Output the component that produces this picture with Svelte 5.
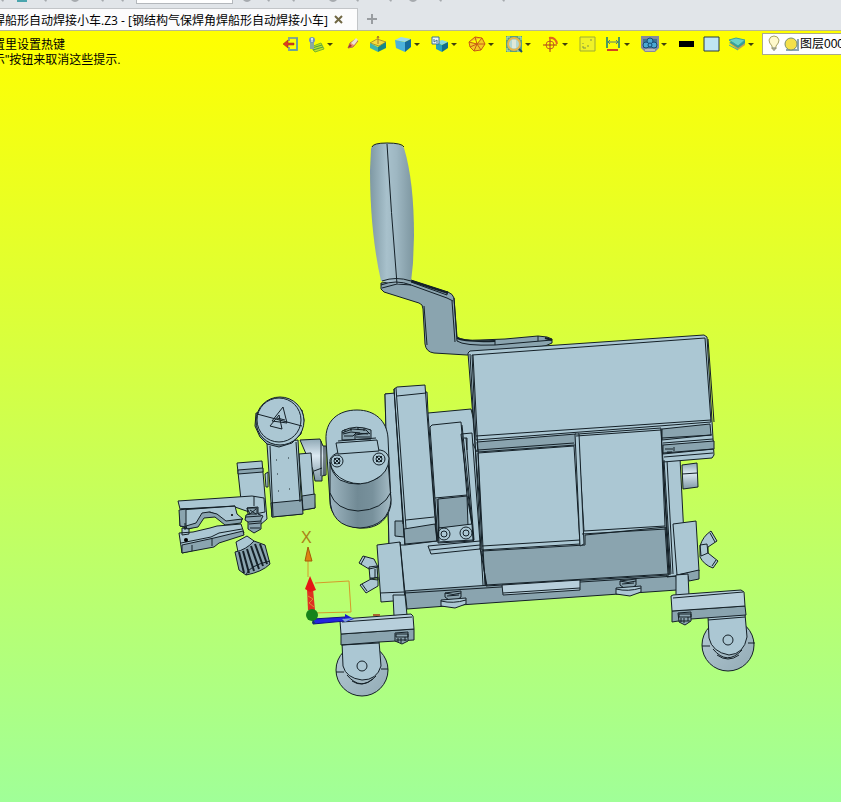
<script>
  const tools = [
    { id: 'exit', label: 'Exit', menu: false },
    { id: 'sketch', label: 'Layers', menu: true },
    { id: 'pencil', label: 'Edit', menu: false },
    { id: 'plane', label: 'Align plane', menu: false },
    { id: 'cube', label: 'Shade', menu: true },
    { id: 'view', label: 'Views', menu: true },
    { id: 'wire', label: 'Wireframe', menu: true },
    { id: 'fit', label: 'Zoom', menu: true },
    { id: 'target', label: 'Rotate', menu: true },
    { id: 'window', label: 'Window', menu: false },
    { id: 'measure', label: 'Measure', menu: true },
    { id: 'render', label: 'Render', menu: true },
    { id: 'line', label: 'Line colour', menu: false },
    { id: 'face', label: 'Face colour', menu: false },
    { id: 'stack', label: 'Layer manager', menu: true }
  ];
  const marks = [2, 45, 75, 102, 122, 247, 268, 293, 333, 357, 390, 413, 440, 503];
</script>

<div class="app">
  <header>
    <div class="ribbon">
      <svg width="841" height="8" aria-hidden="true">
        <rect x="17" y="0" width="10" height="2" fill="#4aa5ae" />
        {#each marks as x, i}
          {#if i % 3 === 2}
            <path d="M{x - 4} 0Q{x} 4 {x + 4} 0" fill="#a6aaae" />
          {:else}
            <path d="M{x - 1} 0h3l-1 2z" fill="#a6aaae" />
          {/if}
        {/each}
      </svg>
      <input aria-label="Filter" />
    </div>
    <nav class="tabs">
      <a class="tab" href="#doc">焊船形自动焊接小车.Z3 - [钢结构气保焊角焊船形自动焊接小车]</a>
      <button class="close" aria-label="Close tab">
        <svg width="10" height="10"><path d="M1 1l7 7M8 1l-7 7" stroke="#706744" stroke-width="2" /></svg>
      </button>
      <button class="add" aria-label="New tab">
        <svg width="12" height="12"><path d="M6 1v10M1 6h10" stroke="#999da1" stroke-width="2" /></svg>
      </button>
    </nav>
  </header>

  <main>
    <svg class="scene" viewBox="0 31 841 771" role="img" aria-label="Model">
      <defs>
        <linearGradient id="grip"><stop stop-color="#7f99a4" /><stop offset=".38" stop-color="#a8c1cc" /><stop offset=".6" stop-color="#9eb7c2" /><stop offset="1" stop-color="#7c959f" /></linearGradient>
        <linearGradient id="drum"><stop stop-color="#9db5c0" /><stop offset=".45" stop-color="#718a95" /><stop offset=".7" stop-color="#78919c" /><stop offset="1" stop-color="#a4bbc5" /></linearGradient>
        <linearGradient id="shaft" x2="0" y2="1"><stop stop-color="#8fa8b5" /><stop offset=".4" stop-color="#dbe9f2" /><stop offset="1" stop-color="#7f98a5" /></linearGradient>
        <linearGradient id="rim" x2="1" y2="1"><stop stop-color="#b4cad4" /><stop offset="1" stop-color="#93abb6" /></linearGradient>
      </defs>

      <!-- crank handle -->
      <path class="m" d="M381 283V289L384 292 419 303Q423 304 423 309L425 344Q426 352 434 353L467 355 505 352 545 346 552 343V339L547 337 538 336 505 339 480 340Q463 341 457 337L454 298Q453 294 448 292L411 280Z" />
      <path class="n" d="M382 288L397 284 411 285 447 298 453 301M454 298L457 341Q464 346 495 345L552 340M495 340V345M538 336V341M411 282L447 295 447 291M424 306L427 345M452 301L455 342" />
      <path class="b" d="M457 338Q464 342 495 341M411 281L448 293M545 338L552 340" />
      <path fill="url(#grip)" d="M371 149Q372 143 387 143 401 143 404 148 414 181 414 236L413 263 411 282Q396 286 381 281C372 241 370 200 370 170Z" />
      <path class="n" d="M372 147Q373 143 387 143 402 143 404 147M387 144Q391 211 397 284M382 281Q396 276 411 281M381 285Q396 279 411 285" />

      <!-- chassis behind the main panels -->
      <path class="l" d="M385 394L427 392 428 413 471 409 480 445 489 587 405 596 389 545Z" />
      <path class="m" d="M405 591L676 572 677 590 460 605 407 609Z" />
      <path class="l" d="M661 457L680 458 686 575 667 577Z" />
      <path class="n" d="M667 460L673 574M405 593L676 576" />

      <!-- main housing -->
      <path class="l" d="M468 353L470 351 704 335 707 337 714 455 712 458 663 462 669 575 486 586Z" />
      <path class="m" d="M477 442L576 434 576 445 478 452ZM662 429L710 424 711 435 662 440ZM663 445L714 441 714 449 663 454Z" />
      <path class="m" d="M482 551L585 545 585 535 666 527 669 574 486 585Z" />
      <path class="l" d="M478 453L574 446 580 544 482 550ZM578 434L661 428 665 526 584 531Z" />
      <path class="l" d="M575 434L579 434 584 544 580 546Z" />
      <path class="n" d="M472 355L705 338 711 422 476 440ZM473 355L485 586M471 440L477 452M476 436L711 420M662 438L712 435M663 443L713 439M663 453L713 449M482 546L580 540M582 534L666 529M661 429L670 575M665 527L668 574M478 450L574 443M470 354L483 585M664 460L671 574M576 436L661 430M708 339L714 422" />
      <path class="n" d="M665 449h8M667 452h5M674 447v4M664 457L713 453" />
      <path class="p" d="M502 585L580 580 580 590 503 595Z" />
      <path class="n" d="M503 593L580 588" />

      <!-- underside screws -->
      <g id="foot">
        <path class="m" d="M620 581L636 579 636 585 632 588 624 588 620 585Z" />
        <path class="l" d="M616 588L641 586V592L630 596 616 594Z" />
        <path class="n" d="M616 589Q628 592 641 588M620 581Q628 584 636 581M622 584L634 583" />
      </g>
      <use href="#foot" x="-175" y="12" />

      <!-- left column -->
      <path class="l" d="M385 394L395 393 404 534 405 545 389 545Z" />
      <path class="l" d="M394 389L397 387 425 385 427 413 435 518 437 541 405 545Z" />
      <path class="m" d="M404 529L435 524 437 541 405 544ZM395 521L403 521 404 537 395 536Z" />
      <path class="n" d="M397 396L426 393M396 388L406 528M394 389L403 524M406 520L434 517M428 413L437 541M431 430L438 541" />

      <!-- narrow guide -->
      <path class="l" d="M461 434L472 433 480 543 474 544ZM430 427L432 425 461 422 467 496 472 524 473 541 438 543Z" />
      <path class="m" d="M438 499L467 496 468 526 439 528Z" />
      <path class="l" d="M439 528L472 524 473 540 438 542Z" />
      <path class="n" d="M462 425L472 523M435 498L467 495M437 499L439 541M464 438h3v12M466 438L474 540" />
      <g class="nf"><circle cx="444" cy="534" r="6" /><circle cx="444" cy="534" r="3" /><circle cx="466" cy="533" r="6" /><circle cx="466" cy="533" r="3" /></g>
      <path class="l" d="M428 546L480 541 480 549 431 554Z" />
      <path class="n" d="M430 550L480 545M480 548L487 586" />

      <!-- motor -->
      <path class="s" d="M300 440L320 439 323 446 326 446V475L322 476 322 481 315 481 313 470Z" />
      <path class="n" d="M321 441V476M324 446V475M314 471L322 468" />
      <path class="l" d="M326 440C325 421 338 410 357 410 375 410 387 421 388 438L391 504C388 521 376 529 360 528 343 527 330 515 330 502Z" />
      <path fill="url(#drum)" stroke="#142027" d="M330 462Q331 473 340 480 358 489 378 478 387 471 388 461L391 500Q389 526 360 528 330 527 330 497Z" />
      <path class="n" d="M330 493Q336 510 358 511 383 510 391 492" />
      <path class="l" d="M330 462Q329 457 337 453L380 450Q387 451 389 458 389 473 374 480 361 487 346 481 332 475 330 462Z" />
      <path class="l" d="M336 443L377 440 379 451 338 454Z" />
      <path class="m" d="M342 431Q356 424 371 430L371 439 342 440Z" />
      <path class="n" d="M342 433L352 429 366 430 370 434M338 441L376 438M344 436h9l3-3 12 1M355 440v-5l14-2M343 434l8-2 9 1M356 437h14M345 429v3M351 428v3M358 427v3M364 428v3" />
      <g class="nf"><circle cx="337" cy="461" r="6" /><circle cx="337" cy="461" r="3" /><circle cx="379" cy="459" r="6" /><circle cx="379" cy="459" r="3" /><path d="M334 458l6 6M340 458l-6 6M376 456l6 6M382 456l-6 6" /></g>

      <!-- adjusting post -->
      <path class="l" d="M299 454L311 453 315 508 303 510Z" />
      <path class="m" d="M302 496L315 494 315 508 303 510Z" />
      <path class="l" d="M267 444L298 440 302 514 272 517Z" />
      <path class="m" d="M271 503L302 500 303 514 272 517Z" />
      <path class="n" d="M270 446L273 516M296 442L300 502M276 460h1M288 458h1M277 474h1M289 489h1M278 491h1" />
      <path class="m" d="M256 413L255 426 260 437 267 444 279 447 292 443 301 434 304 420 302 410Z" />
      <circle class="l" cx="280" cy="421" r="24" />
      <circle class="nf" cx="279" cy="420" r="22" />
      <path class="n" d="M257 414L302 426M283 407L272 421 287 423ZM279 415L270 426 282 429ZM277 418L285 420" />

      <!-- clamp -->
      <path class="l" d="M237 463L262 461 267 519 260 525 241 500Z" />
      <path class="m" d="M238 470L263 468V472L238 474Z" />
      <path class="l" d="M265 474L268 472V487L266 487Z" />
      <path class="l" d="M178 501L252 496 264 498 265 512 255 514 235 507 180 509Z" />
      <path class="l" d="M180 510L235 506 237 514 243 519 226 523 218 515 210 512 203 514 197 526 189 529 180 526Z" />
      <path class="m" d="M179 510L186 509V527L180 526ZM186 526L196 523 202 513 209 512 217 514 226 521 242 519 241 523 225 525 215 517 204 518 198 527 187 529Z" />
      <path class="l" d="M182 528L189 529V534L182 535ZM179 533L193 532 210 528 217 526 241 524 244 533 219 541 213 546 182 553Z" />
      <path class="m" d="M182 545L214 538 243 531 244 535 219 543 214 547 182 553Z" />
      <path class="n" d="M181 543L211 537 219 533 242 529M192 545v6M212 538v8M254 496v10M181 509L235 506M185 523v7" />
      <circle cx="186" cy="540" r="2" /><circle cx="232" cy="515" r="1" />
      <path class="m" d="M247 508L258 507 258 514 263 516 261 520 261 529 254 533 248 529V522L245 520 246 515 250 514Z" />
      <path class="n" d="M247 508h10v6h-9zM250 510l6 4M250 514l6-5M246 517l15-1M248 522l13-1M249 524l11-1M250 528h10" />
      <path class="l" d="M236 542L247 536 254 541 253 548 238 552Z" />
      <path class="m" d="M235 552Q246 550 254 541L265 545 270 564Q262 572 246 575L239 570Z" />
      <path class="b" d="M239 552L244 573M243 551L249 573M247 549L254 571M251 546L259 569M255 544L263 566M260 544L267 564" />
      <path class="n" d="M246 575Q248 566 270 561" />

      <!-- side blocks, wing nuts and bolt -->
      <path class="l" d="M377 545L400 542 405 600 381 602Z" />
      <path class="n" d="M380 593L404 592M400 542L405 593" />
      <path class="l" d="M393 595L405 595 407 615 394 616ZM359 563L363 556 374 559 378 567 369 569ZM371 579L360 585 366 593 378 586 378 577ZM369 567L377 566 378 580 370 579Z" />
      <path class="n" d="M361 564L365 557M362 584L367 591M375 569V578M370 578L378 578" />
      <path class="l" d="M673 524L696 521 699 571 677 575Z" />
      <path class="m" d="M677 575L699 570V579L689 581 688 576Z" />
      <path class="l" d="M676 575L688 574 689 596 676 596Z" />
      <path class="s" d="M682 465L697 463 698 487 683 489Z" />
      <path class="n" d="M682 474L697 473" />
      <path class="l" d="M700 546Q703 536 711 531L717 541 708 547 708 553 718 561 713 568Q704 565 700 557Z" />
      <path class="n" d="M700 545L707 544 708 553 701 556ZM710 533L715 542M716 560L712 566" />

      <!-- right wheel -->
      <circle cx="728" cy="645" r="26" fill="url(#rim)" stroke="#142027" />
      <path class="n" d="M702 646h8M748 643h7M713 649Q727 666 742 650M717 655Q728 663 739 655" />
      <path class="l" d="M708 617L745 614 747 637Q744 654 729 655 712 652 709 638Z" />
      <path class="m" d="M672 611L745 606 746 615 691 619 672 622Z" />
      <path class="p" d="M671 596L673 595 741 590 744 592 745 606 672 611Z" />
      <path class="n" d="M673 598L743 592M708 620L745 617" />
      <path class="m" d="M678 613L691 612 691 621 685 625 679 622Z" />
      <path class="n" d="M679 614h12v3h-12zM681 618v4M688 617v4M684 618v5M679 621h11" />
      <circle class="nf" cx="728" cy="640" r="5" />

      <!-- left wheel -->
      <circle cx="362" cy="670" r="26" fill="url(#rim)" stroke="#142027" />
      <path class="n" d="M336 672h8M381 669h7M347 675Q361 692 376 676M352 681Q362 688 373 679" />
      <path class="l" d="M342 642L379 641 381 666Q377 680 362 680 346 678 343 666Z" />
      <path class="m" d="M341 634L414 629V640L379 642 341 645Z" />
      <path class="p" d="M340 621L342 619 411 614 413 616 414 629 341 634Z" />
      <path class="n" d="M342 622L412 617M342 645L379 643" />
      <path class="m" d="M395 633L408 632V641L402 644 395 641Z" />
      <path class="n" d="M396 634h12v3h-12zM398 638v4M405 637v4M401 638v5M396 640h11" />
      <circle class="nf" cx="362" cy="666" r="5" />

      <!-- axis triad -->
      <path d="M308 560V577M315 583L349 581 351 612 313 613" fill="none" stroke="#d59a2a" />
      <path d="M308 547L312 561H305Z" fill="#dd8412" stroke="#a55b08" />
      <path d="M307 589H313L315 610H308Z" fill="#df3022" />
      <path d="M308 596l5 3-4 4 5 4" fill="none" stroke="#d69334" />
      <path d="M310 576L316 590 310 592 305 589Z" fill="#e51515" />
      <path d="M313 619L345 617V621L313 624Z" fill="#2424df" stroke="#101086" />
      <path d="M345 614L354 619 345 622Z" fill="#1919cf" />
      <path d="M342 619L353 618 345 622Z" fill="#7fa1d7" />
      <circle cx="312" cy="615" r="6" fill="#16831b" />
      <path d="M313 620l3 4-4-1z" fill="#103b65" />
      <path d="M373 615h7" stroke="#a96332" stroke-width="2" />
      <text x="301" y="543">X</text>
    </svg>

    <div class="overlay">
      <p>置里设置热键<br />示"按钮来取消这些提示.</p>
      {#each tools as t}
        <button class="tool" class:menu={t.menu} aria-label={t.label}>
          <svg width="18" height="18" viewBox="0 0 18 18">
            {#if t.id === 'exit'}
              <path d="M7 6V3h8v12H7v-3" fill="none" stroke="#8aa888" stroke-width="2" /><path d="M15 3v12H8" fill="none" stroke="#4d9fa5" /><path d="M1 9l5-4v3h6v2H6v3z" fill="#de3c20" stroke="#8e3714" stroke-width=".5" />
            {:else if t.id === 'sketch'}
              <path d="M4 12l10-4 3 6-9 3z" fill="#c2e32b" stroke="#79b52e" /><path d="M5 13l10-3M6 15l10-3" stroke="#4aa044" /><path d="M3 7h4v7H3z" fill="#8bab9b" /><circle cx="5" cy="5" r="3" fill="#7396ba" /><path d="M5 3v4M4 4h2" stroke="#fff" />
            {:else if t.id === 'pencil'}
              <path d="M4 13l2-5 6-4 2 2-5 6z" fill="#ec9171" stroke="#b5734d" /><path d="M7 8l3 2 4-5-2-2z" fill="#ece5d5" /><path d="M4 13l2-4 2 2z" fill="#a62e2b" />
            {:else if t.id === 'plane'}
              <path d="M1 8l7-4 9 3-7 4z" fill="#f4db3f" stroke="#ae952a" /><path d="M1 8l8 4v5l-8-4z" fill="#3fb4ad" /><path d="M9 12l8-5v6l-8 4z" fill="#178687" /><path d="M9 9V1M8 3l1-2 1 2" fill="none" stroke="#a87829" />
            {:else if t.id === 'cube'}
              <path d="M1 5l6-3 10 2-6 3z" fill="#9edbea" /><path d="M1 5l10 2v10L2 13z" fill="#4cb1db" /><path d="M11 7l6-3v8l-6 5z" fill="#156b9b" />
            {:else if t.id === 'view'}
              <path d="M5 7l6-2 6 2-6 3z" fill="#85d9dd" /><path d="M5 7l6 3v7l-6-3z" fill="#28a3ba" /><path d="M11 10l6-3v6l-6 4z" fill="#126e8c" /><path d="M1 2h7v7H1z" fill="#edf6fb" stroke="#36709c" /><path d="M3 4v3l3-2v3" fill="none" stroke="#416f8b" />
            {:else if t.id === 'wire'}
              <path d="M1 7l6-5 7 1 3 6-4 6-7 1-4-4zM1 7l8 2 5-6M9 9l8 0M9 9l4 6M9 9l-3 7M9 9l-2-7M9 9l-7 3" fill="#f3ca24" stroke="#c65a15" />
            {:else if t.id === 'fit'}
              <path d="M1 1h16v16H1z" fill="#5b9e83" /><path d="M2 5V2h3M13 2h3v3M2 13v3h3M12 16h4" fill="none" stroke="#c8e7aa" /><circle cx="9" cy="9" r="6" fill="#b3d7d2" stroke="#e6b64b" stroke-width="2" /><path d="M7 5h4v8H7z" fill="#dfe8d8" /><path d="M14 14l3 3" stroke="#254f63" stroke-width="2" />
            {:else if t.id === 'target'}
              <circle cx="8" cy="10" r="4" fill="none" stroke="#ca6326" /><path d="M8 3v14M1 10h14" stroke="#aa3a18" /><path d="M7 3q7-1 8 6" fill="none" stroke="#e0671d" stroke-width="2" />
            {:else if t.id === 'window'}
              <path d="M1 2h15v14H1z" fill="#f0f227" stroke="#9eac35" /><path d="M4 11v2h3M12 4v2M8 11h2M4 8v1" fill="none" stroke="#809347" />
            {:else if t.id === 'measure'}
              <path d="M3 2v11M15 2v11" stroke="#4a9961" stroke-width="2" /><path d="M4 7h10M6 5L4 7l2 2M12 5l2 2-2 2" fill="none" stroke="#537c78" /><path d="M3 15h11" stroke="#d44621" stroke-width="2" />
            {:else if t.id === 'render'}
              <path d="M0 1h18v12l-4 4H4l-4-4z" fill="#858a9f" /><path d="M2 4h14v9H2z" fill="#3e7391" /><g fill="#4aa9d2" stroke="#174d77"><circle cx="9" cy="6" r="3" /><circle cx="5" cy="10" r="3" /><circle cx="13" cy="10" r="3" /><circle cx="9" cy="10" r="2" /></g><path d="M4 15h10" stroke="#b9b9b3" stroke-width="2" />
            {:else if t.id === 'line'}
              <path d="M1 6h15v6H1z" fill="#000" />
            {:else if t.id === 'face'}
              <path d="M1 2h15v14H1z" fill="#bfe5f2" stroke="#263b43" />
            {:else}
              <path d="M1 8l9 7 7-5V8z" fill="#c2a152" /><path d="M1 7l9 6 7-5V5z" fill="#359c99" /><path d="M1 5l7-2 9 2-7 6z" fill="#6bd2c6" stroke="#3aa39a" /><path d="M1 10l9 5" stroke="#4caaa2" />
            {/if}
          </svg>
          {#if t.menu}<span class="caret"></span>{/if}
        </button>
      {/each}
      <label class="layer">
        <svg width="32" height="18" aria-hidden="true">
          <path d="M4 11Q1 8 1 5 2 1 6 1t5 4q0 3-3 6v3H4z" fill="#fff9cb" stroke="#a9a363" /><path d="M4 13h4M5 15h2" stroke="#737b80" />
          <path d="M18 15h12V4" fill="none" stroke="#8ba5b5" stroke-width="2" /><circle cx="23" cy="9" r="6" fill="#f4e04a" stroke="#7b8f6b" />
        </svg>
        <select aria-label="图层"><option>图层0000</option></select>
      </label>
    </div>
  </main>
</div>

<style>
  :global(body) { margin: 0; }
  .app {
    display: flex;
    flex-direction: column;
    height: 100vh;
    overflow: hidden;
    font: 12px/15px "Liberation Sans", "Noto Sans CJK SC", sans-serif;
    color: #000;
  }
  header { background: #e1e5e9; border-bottom: 1px solid #b9b98f; }
  .ribbon { position: relative; height: 8px; overflow: hidden; }
  .ribbon svg { display: block; }
  .ribbon input {
    position: absolute;
    left: 136px;
    bottom: 4px;
    width: 97px;
    height: 20px;
    box-sizing: border-box;
    border: 1px solid #b4b8bc;
    background: #fff;
  }
  .tabs { display: flex; height: 22px; overflow: hidden; }
  .tab {
    margin-left: -7px;
    padding-top: 4px;
    color: #000;
    font-family: "Open Sans", "Noto Sans CJK SC", sans-serif;
    text-decoration: none;
    white-space: nowrap;
    background: #fcfcfd;
    border-top: 1px solid #c2c5c8;
  }
  button { border: 0; padding: 0; background: none; }
  .close {
    width: 30px;
    padding-right: 6px;
    background: #fcfcfd;
    border-top: 1px solid #c2c5c8;
    border-right: 1px solid #c2c5c8;
  }
  .add { width: 28px; }
  .close svg, .add svg { display: block; margin: auto; }
  main {
    position: relative;
    flex: 1;
    min-height: 0;
    background: linear-gradient(#ff0, #a0ff98);
    overflow: hidden;
  }
  .scene { display: block; width: 100%; height: 100%; stroke-linejoin: round; }
  .scene text { font: 16px "Liberation Sans", sans-serif; fill: #a98316; }
  .l { fill: #abc7d3; stroke: #142027; }
  .m { fill: #8aa4af; stroke: #142027; }
  .p { fill: #b7cfdb; stroke: #142027; }
  .s { fill: url(#shaft); stroke: #142027; }
  .n, .nf, .b { fill: none; stroke: #142027; }
  .b { stroke-width: 2; }
  .overlay {
    position: absolute;
    top: 2px;
    left: 0;
    right: 0;
    display: flex;
    align-items: flex-start;
    overflow: hidden;
  }
  p { margin: 5px 0 0 -7px; flex: 0 0 286px; white-space: nowrap; }
  .tool {
    display: flex;
    align-items: center;
    flex: 0 0 25px;
    height: 22px;
    box-sizing: border-box;
    padding-left: 3px;
  }
  .tool.menu { flex-basis: 37px; }
  .tool svg { flex: none; }
  .caret {
    margin-left: 2px;
    border: 3px solid transparent;
    border-top-color: #40400c;
    border-bottom: 0;
  }
  .layer {
    display: flex;
    flex: 1 0 96px;
    align-items: center;
    height: 20px;
    padding-left: 5px;
    background: #fff;
    border: 1px solid #a9aa8e;
  }
  .layer svg { flex: none; }
  select {
    flex: 1;
    appearance: none;
    border: 0;
    padding: 0;
    background: none;
    font: inherit;
    color: #000;
  }
</style>
